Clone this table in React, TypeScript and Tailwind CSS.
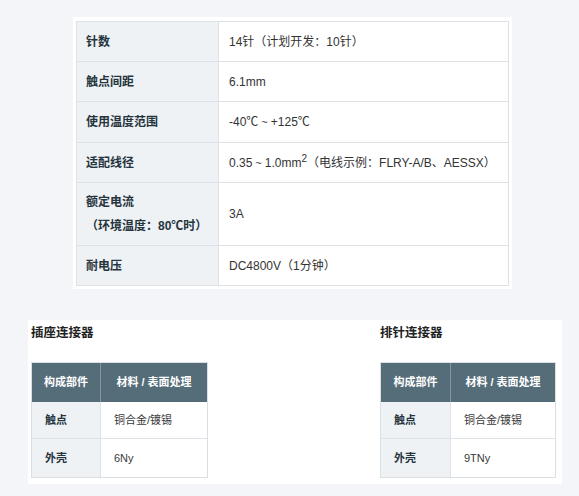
const font = { fontFamily: '"Liberation Sans", "Noto Sans CJK SC", sans-serif' };

const Tilde = () => <span className="mx-[3px] text-[11px]">~</span>;

const specRows = [
  { label: ['针数'], value: <>14针（计划开发：10针）</>, h: 'h-[40px]' },
  { label: ['触点间距'], value: <>6.1mm</>, h: 'h-[40px]' },
  {
    label: ['使用温度范围'],
    value: (
      <>
        -40℃<Tilde />+125℃
      </>
    ),
    h: 'h-[41px]',
  },
  {
    label: ['适配线径'],
    value: (
      <>
        0.35<Tilde />1.0mm<sup className="text-[10px]">2</sup>（电线示例：FLRY-A/B、AESSX）
      </>
    ),
    h: 'h-[40px]',
  },
  { label: ['额定电流', '（环境温度：80℃时）'], value: <>3A</>, h: 'h-[63px]' },
  { label: ['耐电压'], value: <>DC4800V（1分钟）</>, h: 'h-[39px]' },
];

function PartTable({
  title,
  rows,
  colA,
  colB,
}: {
  title: string;
  rows: { part: string; mat: string }[];
  colA: string;
  colB: string;
}) {
  return (
    <div className="flex flex-col">
      <div className="text-[12.5px] leading-[18px] font-bold text-[#222]">{title}</div>
      <div className="mt-[20px] border border-[#d9dfe2] text-[11px]">
        <div className="flex h-[39px] bg-[#556d79] font-bold text-white">
          <div className={`${colA} flex items-center justify-center border-r border-[#8397a1]`}>构成部件</div>
          <div className={`${colB} flex items-center justify-center`}>材料 / 表面处理</div>
        </div>
        {rows.map((r, i) => (
          <div
            key={r.part}
            className={`flex ${i === 0 ? 'h-[37px] border-b border-[#dde3e6]' : 'h-[38px]'}`}
          >
            <div className={`${colA} flex items-center border-r border-[#dde3e6] bg-[#eef2f4] pl-[13px] font-bold text-[#26343e]`}>
              {r.part}
            </div>
            <div className={`${colB} flex items-center bg-white pl-[13px] text-[#3a3a3a]`}>{r.mat}</div>
          </div>
        ))}
      </div>
    </div>
  );
}

export default function App() {
  return (
    <div className="h-[496px] w-[579px] overflow-hidden bg-[#f3f5f9] pt-[17px]" style={font}>
      {/* spec table */}
      <div className="ml-[73px] w-[439px] bg-white pb-[3px] pl-[3px] pt-[4px]">
        <div className="w-[433px] border border-[#dce2e5] text-[12px]">
          {specRows.map((r, i) => (
            <div
              key={i}
              className={`flex ${r.h} ${i < specRows.length - 1 ? 'border-b border-[#dce2e5]' : ''}`}
            >
              <div className="flex w-[142px] flex-col justify-center border-r border-[#dce2e5] bg-[#eef2f4] px-[9px] font-bold leading-[24px] text-[#26343e]">
                {r.label.map((l) => (
                  <span key={l}>{l}</span>
                ))}
              </div>
              <div className="flex flex-1 items-center px-[10px] text-[#333]">
                <span>{r.value}</span>
              </div>
            </div>
          ))}
        </div>
      </div>

      {/* connector materials */}
      <div className="ml-[28px] mt-[31px] flex w-[534px] justify-between bg-white pb-[6px] pl-[3px] pr-[6px] pt-[4px]">
        <PartTable
          title="插座连接器"
          colA="w-[69px]"
          colB="w-[106px]"
          rows={[
            { part: '触点', mat: '铜合金/镀锡' },
            { part: '外壳', mat: '6Ny' },
          ]}
        />
        <PartTable
          title="排针连接器"
          colA="w-[70px]"
          colB="w-[104px]"
          rows={[
            { part: '触点', mat: '铜合金/镀锡' },
            { part: '外壳', mat: '9TNy' },
          ]}
        />
      </div>
    </div>
  );
}
